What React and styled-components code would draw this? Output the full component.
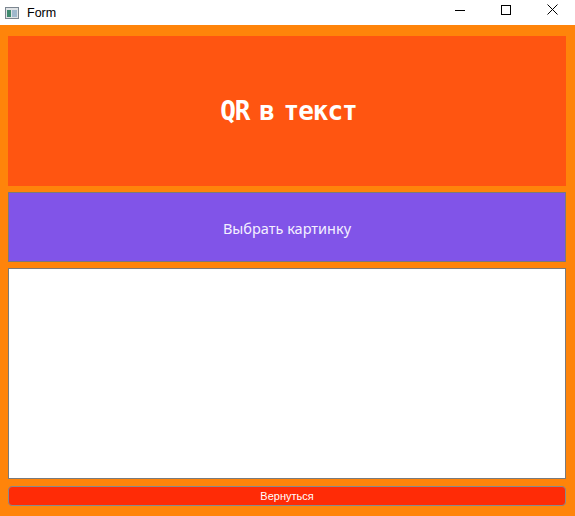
import styled, { createGlobalStyle } from 'styled-components';

const GlobalStyle = createGlobalStyle`
  html, body {
    margin: 0;
    padding: 0;
    background: #ffffff;
  }
  #root {
    width: 575px;
    height: 516px;
  }
`;

function AppIcon() {
  return (
    <svg width="14" height="14" viewBox="0 0 14 14">
      <rect x="0.5" y="1.5" width="13" height="11" fill="#dfe3e6" stroke="#7c8690" />
      <rect x="2" y="4" width="4" height="7" fill="#3f8a6e" />
      <rect x="7" y="4" width="5" height="7" fill="#9fb8cc" />
    </svg>
  );
}

function App() {
  return (
    <>
      <GlobalStyle />
      <Window>
        <TitleBar>
          <TitleLeft>
            <AppIcon />
            <TitleText>Form</TitleText>
          </TitleLeft>
          <Controls>
            <CtrlButton>
              <svg width="10" height="10" viewBox="0 0 10 10">
                <path d="M0 5.5h10" stroke="#000" strokeWidth="1" />
              </svg>
            </CtrlButton>
            <CtrlButton>
              <svg width="10" height="10" viewBox="0 0 10 10">
                <rect x="0.5" y="0.5" width="9" height="9" fill="none" stroke="#000" strokeWidth="1" />
              </svg>
            </CtrlButton>
            <CtrlButton>
              <svg width="11" height="11" viewBox="0 0 11 11">
                <path d="M0.5 0.5l10 10M10.5 0.5l-10 10" stroke="#000" strokeWidth="1" />
              </svg>
            </CtrlButton>
          </Controls>
        </TitleBar>
        <Body>
          <Header>QR в текст</Header>
          <PickButton>Выбрать картинку</PickButton>
          <Output />
          <BackButton>Вернуться</BackButton>
        </Body>
      </Window>
    </>
  );
}

export default App;

const Window = styled.div`
  width: 575px;
  height: 516px;
  display: flex;
  flex-direction: column;
  font-family: 'Noto Sans', 'Liberation Sans', sans-serif;
`;

const TitleBar = styled.div`
  height: 25px;
  background: #ffffff;
  display: flex;
  align-items: center;
  justify-content: space-between;
`;

const TitleLeft = styled.div`
  display: flex;
  align-items: center;
  gap: 8px;
  padding-left: 5px;
`;

const TitleText = styled.span`
  font-size: 12.5px;
  color: #000;
  font-family: 'Liberation Sans', sans-serif;
`;

const Controls = styled.div`
  display: flex;
  height: 100%;
`;

const CtrlButton = styled.div`
  width: 46px;
  height: 100%;
  display: flex;
  align-items: center;
  justify-content: center;
  padding-bottom: 6px;
  box-sizing: border-box;
`;

const Body = styled.div`
  flex: 1;
  background: #ff840a;
  padding: 11px 9px 0 8px;
  display: flex;
  flex-direction: column;
  gap: 6px;
`;

const Header = styled.div`
  height: 150px;
  background: #ff5511;
  display: flex;
  align-items: center;
  justify-content: center;
  color: #ffffff;
  font-family: 'DejaVu Sans Mono', monospace;
  font-weight: bold;
  font-size: 26px;
  letter-spacing: -1px;
  word-spacing: -5px;
  padding-left: 3px;
`;

const PickButton = styled.div`
  height: 70px;
  box-sizing: border-box;
  background: #8154e8;
  border: 1px solid #7a7a7a;
  display: flex;
  align-items: center;
  justify-content: center;
  color: #f4f0ff;
  font-size: 14.5px;
  padding-top: 2px;
`;

const Output = styled.div`
  height: 211px;
  box-sizing: border-box;
  background: #ffffff;
  border: 1px solid #7a7a7a;
`;

const BackButton = styled.div`
  margin-top: 1px;
  height: 20px;
  box-sizing: border-box;
  background: #ff2b06;
  border: 1px solid #8a8a8a;
  border-radius: 4px;
  display: flex;
  align-items: center;
  justify-content: center;
  color: #ffffff;
  font-size: 11px;
  font-family: 'Liberation Sans', sans-serif;
`;
